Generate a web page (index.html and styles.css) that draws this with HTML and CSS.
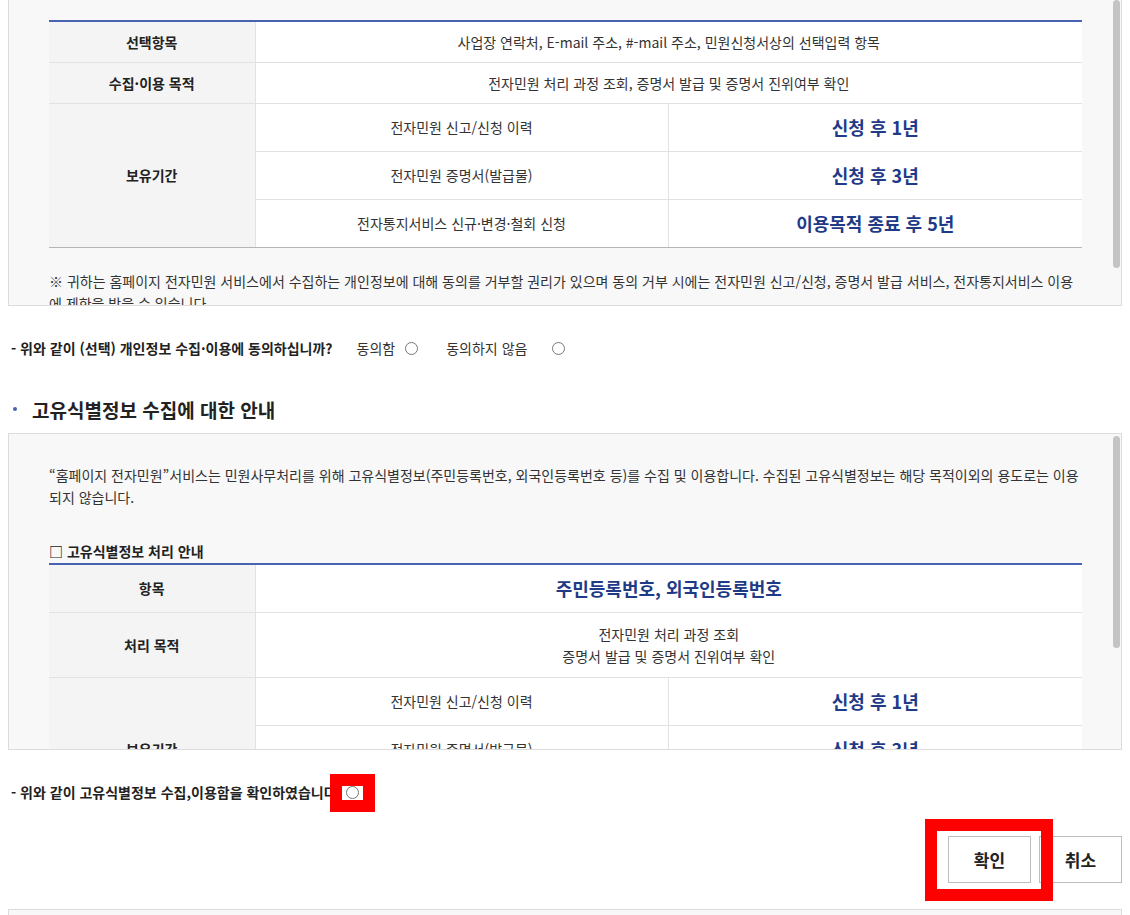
FILE: index.html
```html
<!DOCTYPE html>
<html lang="ko">
<head>
<meta charset="utf-8">
<title>개인정보 수집·이용 동의</title>
<link rel="stylesheet" href="styles.css">
</head>
<body>
<div class="page">
  <div class="scrollbox box-first">
    <span class="thumb"></span>
    <table class="info">
      <colgroup><col class="c1"><col class="c2"><col class="c3"></colgroup>
      <tr>
        <th>선택항목</th>
        <td colspan="2">사업장 연락처, E-mail 주소, #-mail 주소, 민원신청서상의 선택입력 항목</td>
      </tr>
      <tr>
        <th>수집·이용 목적</th>
        <td colspan="2">전자민원 처리 과정 조회, 증명서 발급 및 증명서 진위여부 확인</td>
      </tr>
      <tr class="sub">
        <th rowspan="3" class="end">보유기간</th>
        <td>전자민원 신고/신청 이력</td>
        <td><strong class="em">신청 후 1년</strong></td>
      </tr>
      <tr class="sub">
        <td>전자민원 증명서(발급물)</td>
        <td><strong class="em">신청 후 3년</strong></td>
      </tr>
      <tr class="sub last">
        <td>전자통지서비스 신규·변경·철회 신청</td>
        <td><strong class="em">이용목적 종료 후 5년</strong></td>
      </tr>
    </table>
    <p class="note">※ 귀하는 홈페이지 전자민원 서비스에서 수집하는 개인정보에 대해 동의를 거부할 권리가 있으며 동의 거부 시에는 전자민원 신고/신청, 증명서 발급 서비스, 전자통지서비스 이용에 제한을 받을 수 있습니다.</p>
  </div>

  <div class="agree agree-1">
    <span class="q">- 위와 같이 (선택) 개인정보 수집·이용에 동의하십니까?</span>
    <label class="opt opt-1">동의함<input class="radio" type="radio" name="agree1"></label>
    <label class="opt opt-2">동의하지 않음<input class="radio" type="radio" name="agree1"></label>
  </div>

  <h3 class="heading">고유식별정보 수집에 대한 안내</h3>

  <div class="scrollbox box-second">
    <span class="thumb"></span>
    <p class="lead">“홈페이지 전자민원”서비스는 민원사무처리를 위해 고유식별정보(주민등록번호, 외국인등록번호 등)를 수집 및 이용합니다. 수집된 고유식별정보는 해당 목적이외의 용도로는 이용되지 않습니다.</p>
    <p class="subtitle">□ 고유식별정보 처리 안내</p>
    <table class="info">
      <colgroup><col class="c1"><col class="c2"><col class="c3"></colgroup>
      <tr class="sub">
        <th>항목</th>
        <td colspan="2"><strong class="em">주민등록번호, 외국인등록번호</strong></td>
      </tr>
      <tr class="multi">
        <th>처리 목적</th>
        <td colspan="2">전자민원 처리 과정 조회<br>증명서 발급 및 증명서 진위여부 확인</td>
      </tr>
      <tr class="sub">
        <th rowspan="3" class="end">보유기간</th>
        <td>전자민원 신고/신청 이력</td>
        <td><strong class="em">신청 후 1년</strong></td>
      </tr>
      <tr class="sub">
        <td>전자민원 증명서(발급물)</td>
        <td><strong class="em">신청 후 3년</strong></td>
      </tr>
      <tr class="sub last">
        <td>전자통지서비스 신규·변경·철회 신청</td>
        <td><strong class="em">이용목적 종료 후 5년</strong></td>
      </tr>
    </table>
    <p class="note">※ 고유식별정보는 관계 법령에 따라 처리되며, 보유기간이 지나면 지체 없이 파기합니다.</p>
  </div>

  <div class="agree agree-2">
    <span class="q">- 위와 같이 고유식별정보 수집,이용함을 확인하였습니다</span>
    <span class="check"><input class="radio" type="radio" name="agree2"><span class="mark mark-radio"></span></span>
  </div>

  <div class="actions">
    <span class="btn-wrap"><button class="btn" type="button">확인</button><span class="mark mark-btn"></span></span>
    <button class="btn" type="button">취소</button>
  </div>

  <div class="next-box"></div>
</div>
</body>
</html>
```

FILE: styles.css
```css
html, body {
  margin: 0;
  padding: 0;
  background: #fff;
  overflow: hidden;
}

body {
  font-family: "Noto Sans CJK KR", "Noto Sans", sans-serif;
  font-size: 14px;
  color: #333;
}

.page {
  padding: 0 8px;
  height: 915px;
  box-sizing: border-box;
}

.scrollbox {
  position: relative;
  background: #f8f8f8;
  border: 1px solid #dcdcdc;
  overflow: hidden;
  box-sizing: border-box;
  padding: 0 39px 0 40px;
}

.thumb {
  position: absolute;
  right: 1px;
  width: 7px;
  border-radius: 4px;
  background: #c4c4c4;
}

.box-first {
  height: 306px;
  border-top: 0;
  padding-top: 20px;
}

.box-first .thumb {
  top: 0;
  height: 268px;
}

.box-second {
  margin-top: 11px;
  height: 317px;
  padding-top: 30px;
}

.box-second .thumb {
  top: 2px;
  height: 212px;
}

.info {
  width: 100%;
  border-collapse: collapse;
  table-layout: fixed;
  border-top: 2px solid #4a62b2;
  background: #fff;
}

.info col.c1 { width: 206px; }
.info col.c2 { width: 413px; }

.info th,
.info td {
  border-bottom: 1px solid #e2e2e2;
  border-right: 1px solid #e2e2e2;
  text-align: center;
  vertical-align: middle;
  padding: 10px;
  line-height: 20px;
  font-size: 14px;
}

.info th {
  background: #f4f4f4;
  font-weight: 700;
  color: #222;
}

.info td {
  color: #333;
}

.info td:last-child {
  border-right: 0;
}

.info .sub td,
.info .sub th {
  line-height: 27px;
}

.info .multi td {
  line-height: 22px;
}

.info .last td,
.info th.end {
  border-bottom-color: #b5b5b5;
}

.em {
  display: block;
  font-size: 18px;
  line-height: 27px;
  font-weight: 700;
  color: #1f3b87;
}

.note {
  margin: 22px 0 0;
  line-height: 22px;
  color: #333;
}

.lead {
  margin: 0;
  line-height: 22px;
  color: #333;
}

.subtitle {
  margin: 33px 0 2px;
  line-height: 20px;
  font-weight: 700;
  color: #222;
}

.agree {
  display: flex;
  align-items: center;
  height: 20px;
  line-height: 20px;
  padding-left: 3px;
  font-weight: 700;
  color: #222;
  white-space: nowrap;
}

.agree-1 { margin-top: 32px; }
.agree-2 { margin-top: 32px; }

.opt {
  display: flex;
  align-items: center;
  font-weight: 400;
  color: #333;
}

.opt-1 { margin-left: 24px; }
.opt-2 { margin-left: 28px; }

.radio {
  margin: 0;
  width: 13px;
  height: 13px;
}

.opt-1 .radio { margin-left: 10px; }
.opt-2 .radio { margin-left: 25px; }

.heading {
  margin: 38px 0 0;
  display: flex;
  align-items: center;
  height: 26px;
  padding-left: 5px;
  font-size: 19px;
  font-weight: 700;
  color: #222;
}

.heading::before {
  content: "";
  width: 4px;
  height: 4px;
  border-radius: 50%;
  background: #4a62b2;
  margin-right: 15px;
}

.check {
  position: relative;
  display: flex;
  margin-left: 9px;
}

.mark {
  position: absolute;
  border: 12px solid #ff0000;
  box-sizing: border-box;
  pointer-events: none;
  z-index: 2;
}

.mark-radio {
  left: -16px;
  top: -12px;
  width: 45px;
  height: 38px;
}

.actions {
  margin-top: 34px;
  display: flex;
  justify-content: flex-end;
  gap: 8px;
}

.btn-wrap {
  position: relative;
  display: flex;
}

.btn {
  width: 83px;
  height: 47px;
  padding: 0;
  border: 1px solid #bdbdbd;
  background: #fff;
  font-family: "Noto Sans CJK KR", "Noto Sans", sans-serif;
  font-size: 17px;
  font-weight: 700;
  color: #222;
}

.mark-btn {
  left: -23px;
  top: -17px;
  width: 128px;
  height: 82px;
}

.next-box {
  margin-top: 26px;
  height: 6px;
  border: 1px solid #dcdcdc;
  border-bottom: 0;
  background: #f8f8f8;
  box-sizing: border-box;
}
```
